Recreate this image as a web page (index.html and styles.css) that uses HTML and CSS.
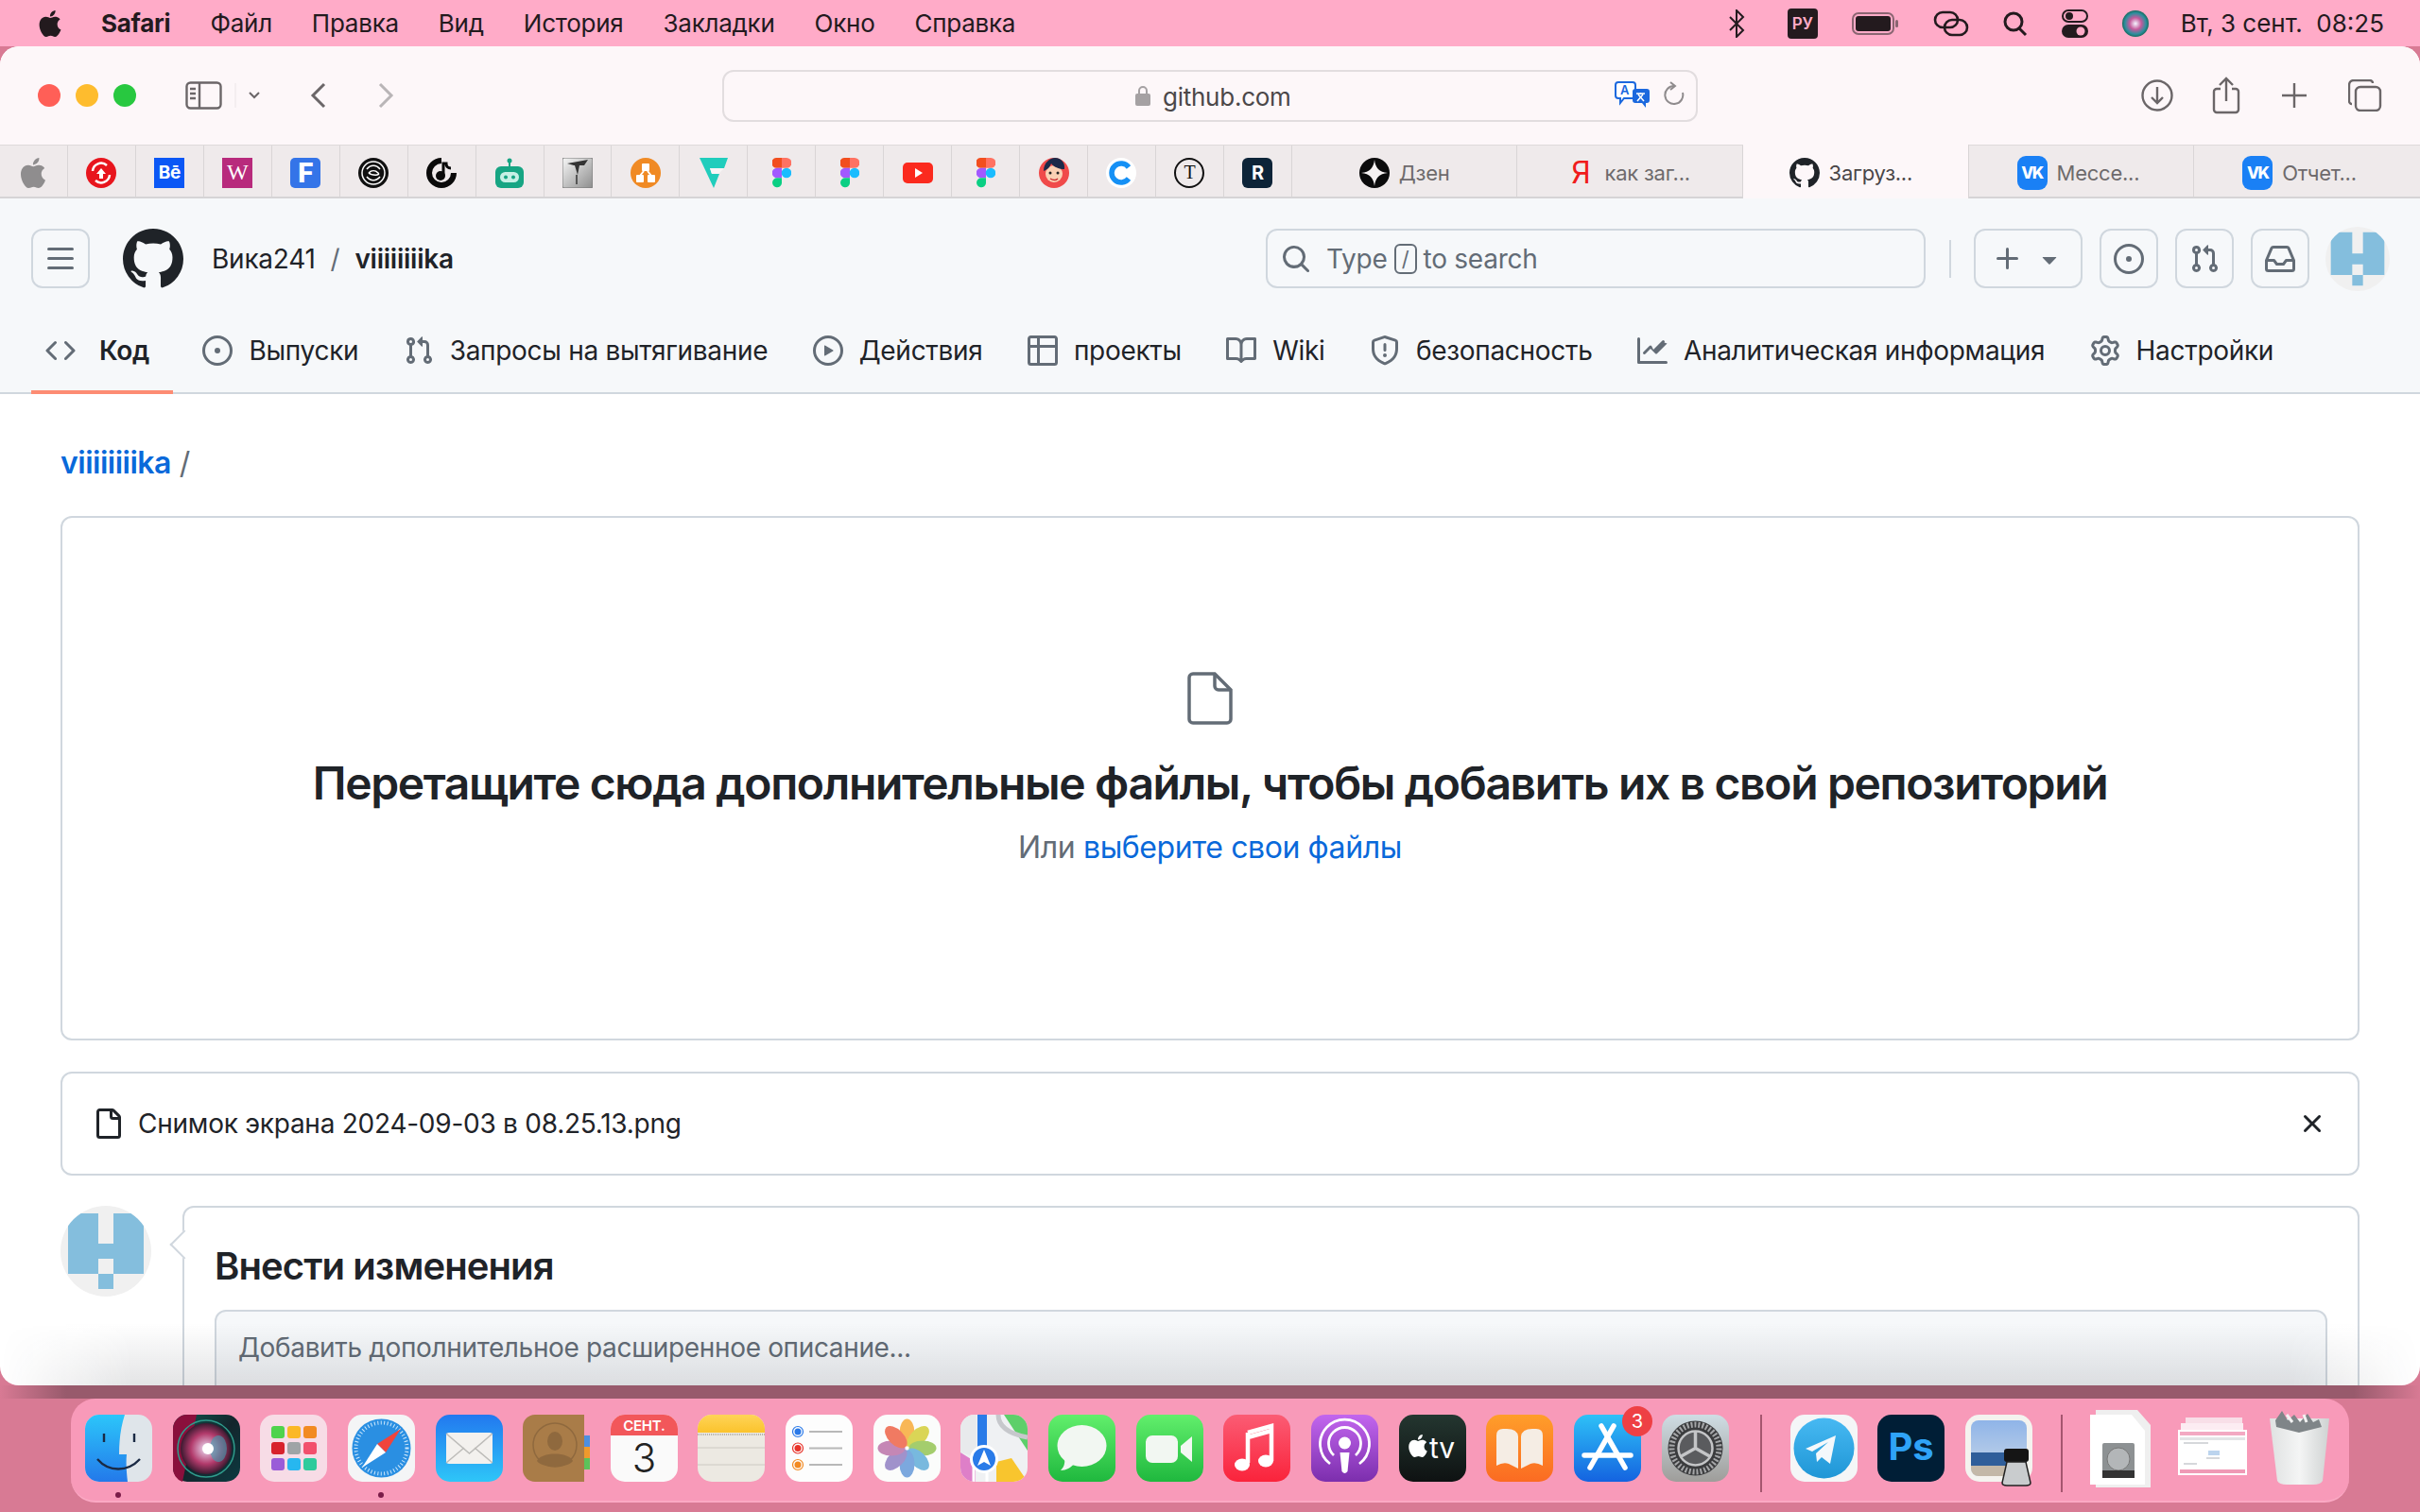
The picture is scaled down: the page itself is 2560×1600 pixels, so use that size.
FILE: index.html
```html
<!DOCTYPE html>
<html lang="ru">
<head>
  <meta charset="UTF-8" />
  <title>Загрузка файлов · viiiiiiiika</title>
  <link rel="stylesheet" href="styles.css">
</head>
<body>
  <svg class="sprites" width="0" height="0">
    <defs>
      <symbol id="apple" viewBox="0 0 24 24"><path d="M12.152 6.896c-.948 0-2.415-1.078-3.96-1.04-2.04.027-3.91 1.183-4.961 3.014-2.117 3.675-.546 9.103 1.519 12.09 1.013 1.454 2.208 3.09 3.792 3.039 1.52-.065 2.09-.987 3.935-.987 1.831 0 2.35.987 3.96.948 1.637-.026 2.676-1.48 3.676-2.948 1.156-1.688 1.636-3.325 1.662-3.415-.039-.013-3.182-1.221-3.22-4.857-.026-3.04 2.48-4.494 2.597-4.559-1.429-2.09-3.623-2.324-4.39-2.376-2-.156-3.675 1.09-4.61 1.09zM15.53 3.83c.843-1.012 1.4-2.427 1.245-3.83-1.207.052-2.662.805-3.532 1.818-.78.896-1.454 2.338-1.273 3.714 1.338.104 2.715-.688 3.559-1.701"/></symbol>
      <symbol id="mark" viewBox="0 0 16 16"><path d="M8 0c4.42 0 8 3.58 8 8a8.013 8.013 0 0 1-5.45 7.59c-.4.08-.55-.17-.55-.38 0-.27.01-1.13.01-2.2 0-.75-.25-1.23-.54-1.48 1.78-.2 3.65-.88 3.65-3.95 0-.88-.31-1.59-.82-2.15.08-.2.36-1.02-.08-2.12 0 0-.67-.22-2.2.82-.64-.18-1.32-.27-2-.27-.68 0-1.36.09-2 .27-1.53-1.03-2.2-.82-2.2-.82-.44 1.1-.16 1.92-.08 2.12-.51.56-.82 1.28-.82 2.15 0 3.06 1.86 3.75 3.64 3.95-.23.2-.44.55-.51 1.07-.46.21-1.61.55-2.33-.66-.15-.24-.6-.83-1.23-.82-.67.01-.27.38.01.53.34.19.73.9.82 1.13.16.45.68 1.31 2.69.94 0 .67.01 1.3.01 1.49 0 .21-.15.45-.55.38A7.995 7.995 0 0 1 0 8c0-4.42 3.58-8 8-8Z"/></symbol>
      <symbol id="code" viewBox="0 0 16 16"><path d="m11.28 3.22 4.25 4.25a.75.75 0 0 1 0 1.06l-4.25 4.25a.749.749 0 0 1-1.275-.326.749.749 0 0 1 .215-.734L13.94 8l-3.72-3.72a.749.749 0 0 1 .326-1.275.749.749 0 0 1 .734.215Zm-6.56 0a.751.751 0 0 1 1.042.018.751.751 0 0 1 .018 1.042L2.06 8l3.72 3.72a.749.749 0 0 1-.326 1.275.749.749 0 0 1-.734-.215L.47 8.53a.75.75 0 0 1 0-1.06Z"/></symbol>
      <symbol id="issue" viewBox="0 0 16 16"><path d="M8 9.5a1.5 1.5 0 1 0 0-3 1.5 1.5 0 0 0 0 3Z"/><path d="M8 0a8 8 0 1 1 0 16A8 8 0 0 1 8 0ZM1.5 8a6.5 6.5 0 1 0 13 0 6.5 6.5 0 0 0-13 0Z"/></symbol>
      <symbol id="pull" viewBox="0 0 16 16"><path d="M1.5 3.25a2.25 2.25 0 1 1 3 2.122v5.256a2.251 2.251 0 1 1-1.5 0V5.372A2.25 2.25 0 0 1 1.5 3.25Zm5.677-.177L9.573.677A.25.25 0 0 1 10 .854V2.5h1A2.5 2.5 0 0 1 13.5 5v5.628a2.251 2.251 0 1 1-1.5 0V5a1 1 0 0 0-1-1h-1v1.646a.25.25 0 0 1-.427.177L7.177 3.427a.25.25 0 0 1 0-.354ZM3.75 2.5a.75.75 0 1 0 0 1.5.75.75 0 0 0 0-1.5Zm0 9.5a.75.75 0 1 0 0 1.5.75.75 0 0 0 0-1.5Zm8.25.75a.75.75 0 1 0 1.5 0 .75.75 0 0 0-1.5 0Z"/></symbol>
      <symbol id="play" viewBox="0 0 16 16"><path d="M8 0a8 8 0 1 1 0 16A8 8 0 0 1 8 0ZM1.5 8a6.5 6.5 0 1 0 13 0 6.5 6.5 0 0 0-13 0Zm4.879-2.773 4.264 2.559a.25.25 0 0 1 0 .428l-4.264 2.559A.25.25 0 0 1 6 10.559V5.442a.25.25 0 0 1 .379-.215Z"/></symbol>
      <symbol id="table" viewBox="0 0 16 16"><path d="M0 1.75C0 .784.784 0 1.75 0h12.5C15.216 0 16 .784 16 1.75v12.5A1.75 1.75 0 0 1 14.25 16H1.75A1.75 1.75 0 0 1 0 14.25ZM6.5 6.5v8h7.75a.25.25 0 0 0 .25-.25V6.5Zm8-1.5V1.75a.25.25 0 0 0-.25-.25H6.5V5Zm-13 1.5v7.75c0 .138.112.25.25.25H5v-8ZM5 5V1.5H1.75a.25.25 0 0 0-.25.25V5Z"/></symbol>
      <symbol id="book" viewBox="0 0 16 16"><path d="M0 1.75A.75.75 0 0 1 .75 1h4.253c1.227 0 2.317.59 3 1.501A3.743 3.743 0 0 1 11.006 1h4.245a.75.75 0 0 1 .75.75v10.5a.75.75 0 0 1-.75.75h-4.507a2.25 2.25 0 0 0-1.591.659l-.622.621a.75.75 0 0 1-1.06 0l-.622-.621A2.25 2.25 0 0 0 5.258 13H.75a.75.75 0 0 1-.75-.75Zm7.251 10.324.004-5.073-.002-2.253A2.25 2.25 0 0 0 5.003 2.5H1.5v9h3.757a3.75 3.75 0 0 1 1.994.574ZM8.755 4.75l-.004 7.322a3.752 3.752 0 0 1 1.992-.572H14.5v-9h-3.495a2.25 2.25 0 0 0-2.25 2.25Z"/></symbol>
      <symbol id="shield" viewBox="0 0 16 16"><path d="M7.467.133a1.748 1.748 0 0 1 1.066 0l5.25 1.68A1.75 1.75 0 0 1 15 3.48V7c0 1.566-.32 3.182-1.303 4.682-.983 1.498-2.585 2.813-5.032 3.855a1.697 1.697 0 0 1-1.33 0c-2.447-1.042-4.049-2.357-5.032-3.855C1.32 10.182 1 8.566 1 7V3.48a1.75 1.75 0 0 1 1.217-1.667Zm.61 1.429a.25.25 0 0 0-.153 0l-5.25 1.68a.25.25 0 0 0-.174.238V7c0 1.358.275 2.666 1.057 3.86.784 1.194 2.121 2.34 4.366 3.297a.196.196 0 0 0 .154 0c2.245-.956 3.582-2.104 4.366-3.298C13.225 9.666 13.5 8.36 13.5 7V3.48a.251.251 0 0 0-.174-.237l-5.25-1.68ZM8.75 4.75v3a.75.75 0 0 1-1.5 0v-3a.75.75 0 0 1 1.5 0ZM9 10.5a1 1 0 1 1-2 0 1 1 0 0 1 2 0Z"/></symbol>
      <symbol id="graph" viewBox="0 0 16 16"><path d="M1.5 1.75V13.5h13.75a.75.75 0 0 1 0 1.5H.75a.75.75 0 0 1-.75-.75V1.75a.75.75 0 0 1 1.5 0Zm14.28 2.53-5.25 5.25a.75.75 0 0 1-1.06 0L7 7.06 4.28 9.78a.751.751 0 0 1-1.042-.018.751.751 0 0 1-.018-1.042l3.25-3.25a.75.75 0 0 1 1.06 0L8.5 7.44l4.72-4.72a.751.751 0 0 1 1.042.018.751.751 0 0 1 .018 1.042Z"/></symbol>
      <symbol id="gear" viewBox="0 0 16 16"><path d="M8 0a8.2 8.2 0 0 1 .701.031C9.444.095 9.99.645 10.16 1.29l.288 1.107c.018.066.079.158.212.224.231.114.454.243.668.386.123.082.233.09.299.071l1.103-.303c.644-.176 1.392.021 1.82.63.27.385.506.792.704 1.218.315.675.111 1.422-.364 1.891l-.814.806c-.049.048-.098.147-.088.294.016.257.016.515 0 .772-.01.147.038.246.088.294l.814.806c.475.469.679 1.216.364 1.891a7.977 7.977 0 0 1-.704 1.217c-.428.61-1.176.807-1.82.63l-1.102-.302c-.067-.019-.177-.011-.3.071a5.909 5.909 0 0 1-.668.386c-.133.066-.194.158-.211.224l-.29 1.106c-.168.646-.715 1.196-1.458 1.26a8.006 8.006 0 0 1-1.402 0c-.743-.064-1.289-.614-1.458-1.26l-.289-1.106c-.018-.066-.079-.158-.212-.224a5.738 5.738 0 0 1-.668-.386c-.123-.082-.233-.09-.299-.071l-1.103.303c-.644.176-1.392-.021-1.82-.63a8.12 8.12 0 0 1-.704-1.218c-.315-.675-.111-1.422.363-1.891l.815-.806c.05-.048.098-.147.088-.294a6.214 6.214 0 0 1 0-.772c.01-.147-.038-.246-.088-.294l-.815-.806C.635 6.045.431 5.298.746 4.623a7.92 7.92 0 0 1 .704-1.217c.428-.61 1.176-.807 1.82-.63l1.102.302c.067.019.177.011.3-.071.214-.143.437-.272.668-.386.133-.066.194-.158.211-.224l.29-1.106C6.009.645 6.556.095 7.299.03 7.53.01 7.764 0 8 0Zm-.571 1.525c-.036.003-.108.036-.137.146l-.289 1.105c-.147.561-.549.967-.998 1.189-.173.086-.34.183-.5.29-.417.278-.97.423-1.529.27l-1.103-.303c-.109-.03-.175.016-.195.045-.22.312-.412.644-.573.99-.014.031-.021.11.059.19l.815.806c.411.406.562.957.53 1.456a4.709 4.709 0 0 0 0 .582c.032.499-.119 1.05-.53 1.456l-.815.806c-.081.08-.073.159-.059.19.162.346.353.677.573.989.02.03.085.076.195.046l1.102-.303c.56-.153 1.113-.008 1.53.27.161.107.328.204.501.29.447.222.85.629.997 1.189l.289 1.105c.029.109.101.143.137.146a6.6 6.6 0 0 0 1.142 0c.036-.003.108-.036.137-.146l.289-1.105c.147-.561.549-.967.998-1.189.173-.086.34-.183.5-.29.417-.278.97-.423 1.529-.27l1.103.303c.109.029.175-.016.195-.045.22-.313.411-.644.573-.99.014-.031.021-.11-.059-.19l-.815-.806c-.411-.406-.562-.957-.53-1.456a4.709 4.709 0 0 0 0-.582c-.032-.499.119-1.05.53-1.456l.815-.806c.081-.08.073-.159.059-.19a6.464 6.464 0 0 0-.573-.989c-.02-.03-.085-.076-.195-.046l-1.102.303c-.56.153-1.113.008-1.53-.27a4.44 4.44 0 0 0-.501-.29c-.447-.222-.85-.629-.997-1.189l-.289-1.105c-.029-.11-.101-.143-.137-.146a6.6 6.6 0 0 0-1.142 0ZM11 8a3 3 0 1 1-6 0 3 3 0 0 1 6 0ZM9.5 8a1.5 1.5 0 1 0-3.001.001A1.5 1.5 0 0 0 9.5 8Z"/></symbol>
      <symbol id="search" viewBox="0 0 16 16"><path d="M10.68 11.74a6 6 0 0 1-7.922-8.982 6 6 0 0 1 8.982 7.922l3.04 3.04a.749.749 0 0 1-.326 1.275.749.749 0 0 1-.734-.215ZM11.5 7a4.499 4.499 0 1 0-8.997 0A4.499 4.499 0 0 0 11.5 7Z"/></symbol>
      <symbol id="bars" viewBox="0 0 16 16"><path d="M1 2.75A.75.75 0 0 1 1.75 2h12.5a.75.75 0 0 1 0 1.5H1.75A.75.75 0 0 1 1 2.75Zm0 5A.75.75 0 0 1 1.75 7h12.5a.75.75 0 0 1 0 1.5H1.75A.75.75 0 0 1 1 7.75ZM1.75 12h12.5a.75.75 0 0 1 0 1.5H1.75a.75.75 0 0 1 0-1.5Z"/></symbol>
      <symbol id="plus" viewBox="0 0 16 16"><path d="M7.75 2a.75.75 0 0 1 .75.75V7h4.25a.75.75 0 0 1 0 1.5H8.5v4.25a.75.75 0 0 1-1.5 0V8.5H2.75a.75.75 0 0 1 0-1.5H7V2.75A.75.75 0 0 1 7.75 2Z"/></symbol>
      <symbol id="caret" viewBox="0 0 16 16"><path d="m4.427 7.427 3.396 3.396a.25.25 0 0 0 .354 0l3.396-3.396A.25.25 0 0 0 11.396 7H4.604a.25.25 0 0 0-.177.427Z"/></symbol>
      <symbol id="inbox" viewBox="0 0 16 16"><path d="M2.8 2.06A1.75 1.75 0 0 1 4.41 1h7.18c.7 0 1.333.417 1.61 1.06l2.74 6.395c.04.093.06.194.06.295v4.5A1.75 1.75 0 0 1 14.25 15H1.75A1.75 1.75 0 0 1 0 13.25v-4.5c0-.101.02-.202.06-.295Zm1.61.44a.25.25 0 0 0-.23.152L1.887 8H4.75a.75.75 0 0 1 .6.3L6.625 10h2.75l1.275-1.7a.75.75 0 0 1 .6-.3h2.863L11.82 2.652a.25.25 0 0 0-.23-.152Zm10.09 7h-2.875l-1.275 1.7a.75.75 0 0 1-.6.3h-3.5a.75.75 0 0 1-.6-.3L4.375 9.5H1.5v3.75c0 .138.112.25.25.25h12.5a.25.25 0 0 0 .25-.25Z"/></symbol>
      <symbol id="file" viewBox="0 0 16 16"><path d="M2 1.75C2 .784 2.784 0 3.75 0h6.586c.464 0 .909.184 1.237.513l2.914 2.914c.329.328.513.773.513 1.237v9.586A1.75 1.75 0 0 1 13.25 16h-9.5A1.75 1.75 0 0 1 2 14.25Zm1.75-.25a.25.25 0 0 0-.25.25v12.5c0 .138.112.25.25.25h9.5a.25.25 0 0 0 .25-.25V6h-2.75A1.75 1.75 0 0 1 9 4.25V1.5Zm6.75.062V4.25c0 .138.112.25.25.25h2.688l-.011-.013-2.914-2.914-.013-.011Z"/></symbol>
      <symbol id="close" viewBox="0 0 16 16"><path d="M3.72 3.72a.75.75 0 0 1 1.06 0L8 6.94l3.22-3.22a.749.749 0 0 1 1.275.326.749.749 0 0 1-.215.734L9.06 8l3.22 3.22a.749.749 0 0 1-.326 1.275.749.749 0 0 1-.734-.215L8 9.06l-3.22 3.22a.751.751 0 0 1-1.042-.018.751.751 0 0 1-.018-1.042L6.94 8 3.72 4.78a.75.75 0 0 1 0-1.06Z"/></symbol>
      <clipPath id="identiClip"><circle cx="48" cy="48" r="48"/></clipPath>
      <symbol id="identicon" viewBox="0 0 96 96"><circle cx="48" cy="48" r="48" fill="#f0f0f0"/><path clip-path="url(#identiClip)" fill="#84bedd" d="M8 8h32v64H8zM56 8h32v64H56zM40 40h16v16H40zM40 72h16v16H40z"/></symbol>
      <symbol id="figma" viewBox="0 0 20 32"><path fill="#f24e1e" d="M4 0h6v10.700H5a5 5 0 0 1-1-10.700z"/><path fill="#ff7262" d="M10 0h5a5.300 5.300 0 0 1 0 10.700h-5z"/><path fill="#a259ff" d="M5 10.700h5v10.600H5a5.300 5.300 0 0 1 0-10.600z"/><circle cx="15" cy="16" r="5.300" fill="#1abcfe"/><path fill="#0acf83" d="M5 21.300h5V27a5 5 0 1 1-5-5.700z"/></symbol>
      <linearGradient id="blueV" x1="0" y1="0" x2="0" y2="1"><stop offset="0" stop-color="#2ec1f7"/><stop offset="1" stop-color="#1463e0"/></linearGradient>
    </defs>
  </svg>

  <header class="menubar">
    <svg class="menu-apple"><use href="#apple"/></svg>
    <b class="menu-app">Safari</b>
    <span>Файл</span>
    <span>Правка</span>
    <span>Вид</span>
    <span>История</span>
    <span>Закладки</span>
    <span>Окно</span>
    <span>Справка</span>
    <div class="menu-status">
      <svg class="menu-bluetooth" width="18" height="30" viewBox="0 0 18 30" fill="none" stroke="#231a1e" stroke-width="2"><path d="M2 8l14 14-7 7V1l7 7L2 22"/></svg>
      <span class="input-badge">РУ</span>
      <svg width="50" height="26" viewBox="0 0 50 26"><rect x="1" y="2" width="43" height="22" rx="6" fill="none" stroke="#8b6572" stroke-width="2"/><rect x="4" y="5" width="37" height="16" rx="3" fill="#231a1e"/><rect x="46" y="9" width="3" height="8" rx="1.500" fill="#8b6572"/></svg>
      <svg width="38" height="30" viewBox="0 0 38 30" fill="none" stroke="#231a1e" stroke-width="2.600"><rect x="2" y="3" width="24" height="16" rx="8"/><rect x="12" y="11" width="24" height="16" rx="8"/></svg>
      <svg width="26" height="28" viewBox="0 0 26 28" fill="none" stroke="#231a1e" stroke-width="3"><circle cx="11" cy="12" r="9"/><path d="M17 19l7 7"/></svg>
      <svg width="28" height="32" viewBox="0 0 28 32"><rect x="1" y="2" width="26" height="12" rx="6" fill="none" stroke="#231a1e" stroke-width="2"/><circle cx="8" cy="8" r="4" fill="#231a1e"/><rect y="17" width="28" height="14" rx="7" fill="#231a1e"/><circle cx="20" cy="24" r="4.500" fill="#ffabc8"/></svg>
      <svg width="28" height="32" viewBox="0 0 28 28"><defs><radialGradient id="siriMini"><stop offset="0" stop-color="#f5f5ff"/><stop offset=".45" stop-color="#c45a9c"/><stop offset=".8" stop-color="#2c8f9e"/><stop offset="1" stop-color="#186b60"/></radialGradient></defs><circle cx="14" cy="14" r="14" fill="url(#siriMini)"/></svg>
      <span class="menu-clock">Вт, 3 сент.&nbsp; 08:25</span>
    </div>
  </header>

  <div class="window">
    <div class="toolbar">
      <div class="toolbar-left">
        <span class="light light-red"></span>
        <span class="light light-yellow"></span>
        <span class="light light-green"></span>
        <svg class="sidebar-btn" width="39" height="30" viewBox="0 0 39 30" fill="none" stroke="#6b6668" stroke-width="2.400"><rect x="1.500" y="1.500" width="36" height="27" rx="4"/><path d="M15 1.500v27"/><path d="M5 8h6M5 13h6M5 18h6"/></svg>
        <svg class="sidebar-chevron" width="28" height="28" viewBox="0 0 28 28" fill="none"><path d="M1 1v26" stroke="#ece6e8"/><path d="M16 11l5 5 5-5" stroke="#6b6668" stroke-width="2"/></svg>
        <svg class="nav-back" width="20" height="30" viewBox="0 0 20 30" fill="none" stroke="#6b6668" stroke-width="3"><path d="M16 3L4 15l12 12"/></svg>
        <svg class="nav-forward" width="20" height="30" viewBox="0 0 20 30" fill="none" stroke="#b9b5b7" stroke-width="3"><path d="M4 3l12 12L4 27"/></svg>
      </div>
      <div class="urlbar">
        <svg class="url-lock" width="16" height="22" viewBox="0 0 16 22"><path d="M4 10V6a4 4 0 0 1 8 0v4" fill="none" stroke="#a5a1a3" stroke-width="2"/><rect y="9" width="16" height="13" rx="2" fill="#a5a1a3"/></svg>
        <span class="url-text">github.com</span>
        <svg class="url-translate" width="38" height="28" viewBox="0 0 38 28"><path fill="#fff" stroke="#1b68de" stroke-width="2" d="M4 1h15a3 3 0 0 1 3 3v11a3 3 0 0 1-3 3H10l-4 5v-5H4a3 3 0 0 1-3-3V4a3 3 0 0 1 3-3z"/><text x="6" y="14" class="translate-a">A</text><path fill="#1b68de" d="M22 8h12a3 3 0 0 1 3 3v9a3 3 0 0 1-3 3h-1v5l-4-5h-7a3 3 0 0 1-3-3v-9a3 3 0 0 1 3-3z"/><path d="M23 13h9M27.500 12v2M24 21l6-7M31 21l-6-7" stroke="#fff" stroke-width="1.500" fill="none"/></svg>
        <svg class="url-reload" width="22" height="28" viewBox="0 0 22 28" fill="none" stroke="#8f8b8d" stroke-width="2"><path d="M11 5a9.500 9.500 0 1 0 9 7"/><path d="M7 1l5 4-5 4"/></svg>
      </div>
      <div class="toolbar-right">
        <svg width="34" height="34" viewBox="0 0 34 34" fill="none" stroke="#6b6668" stroke-width="2.400"><circle cx="17" cy="17" r="15.500"/><path d="M17 8v17M11 19l6 6 6-6"/></svg>
        <svg width="30" height="40" viewBox="0 0 30 40" fill="none" stroke="#6b6668" stroke-width="2.400"><path d="M9 13H5a3 3 0 0 0-3 3v19a3 3 0 0 0 3 3h20a3 3 0 0 0 3-3V16a3 3 0 0 0-3-3h-4"/><path d="M15 26V2M8 9l7-7 7 7"/></svg>
        <svg class="tool-plus" width="28" height="28" viewBox="0 0 28 28" fill="none" stroke="#6b6668" stroke-width="2.400"><path d="M14 1v26M1 14h26"/></svg>
        <svg width="36" height="34" viewBox="0 0 36 34" fill="none" stroke="#6b6668" stroke-width="2.400"><rect x="8" y="8" width="26" height="25" rx="5"/><path d="M4 26a3 3 0 0 1-3-3V6a5 5 0 0 1 5-5h17a3 3 0 0 1 3 3"/></svg>
      </div>
    </div>

    <div class="tabbar">
      <div class="pin"><svg class="fav fav-grey"><use href="#apple"/></svg></div>
      <div class="pin"><svg class="fav" viewBox="0 0 32 32"><circle cx="16" cy="16" r="16" fill="#e8151d"/><path d="M7 14a9 9 0 0 1 15-6M25 18a9 9 0 0 1-15 6" fill="none" stroke="#fff" stroke-width="2.500"/><path d="M16 11l5 6h-3v5h-4v-5h-3z" fill="#fff"/></svg></div>
      <div class="pin"><span class="fav-tile fav-be">Bē</span></div>
      <div class="pin"><span class="fav-tile fav-w">W</span></div>
      <div class="pin"><span class="fav-tile fav-f">F</span></div>
      <div class="pin"><svg class="fav" viewBox="0 0 32 32"><circle cx="16" cy="16" r="16" fill="#111"/><circle cx="16" cy="16" r="12" fill="none" stroke="#fff" stroke-width="1.500"/><path d="M9 12c4-5 10-5 14 0M9 20c4 5 10 5 14 0M11 16c3-3 7-3 10 0s-7 3-10 0" fill="none" stroke="#fff" stroke-width="1.600"/></svg></div>
      <div class="pin"><svg class="fav" viewBox="0 0 32 32"><path d="M16 3a13 13 0 1 0 13 13" fill="none" stroke="#0a0a0a" stroke-width="6"/><circle cx="15" cy="19" r="5" fill="#0a0a0a"/><path d="M18 19V6h3c0 3 2 5 5 5" fill="none" stroke="#0a0a0a" stroke-width="3"/></svg></div>
      <div class="pin"><svg class="fav" viewBox="0 0 32 32"><path d="M16 1v9" stroke="#17a583" stroke-width="2"/><circle cx="16" cy="3" r="2.500" fill="#17a583"/><rect x="1" y="9" width="30" height="23" rx="6" fill="#17a583"/><rect x="6" y="15" width="20" height="11" rx="5.500" fill="#c7f0e5"/><circle cx="12" cy="20.500" r="2" fill="#17a583"/><circle cx="20" cy="20.500" r="2" fill="#17a583"/></svg></div>
      <div class="pin"><svg class="fav" viewBox="0 0 32 32"><defs><linearGradient id="archive" x1="0" y1="0" x2="1" y2="1"><stop offset="0" stop-color="#f7f7f7"/><stop offset="1" stop-color="#8d8d8d"/></linearGradient></defs><rect width="32" height="32" rx="2" fill="url(#archive)" stroke="#777"/><path d="M5 6l22-4-4 6H12zM13 8l3 10 2-10" fill="#333"/><path d="M15 18v10" stroke="#555" stroke-width="2"/></svg></div>
      <div class="pin"><svg class="fav" viewBox="0 0 32 32"><circle cx="16" cy="16" r="16" fill="#f08a24"/><g fill="#fff"><rect x="12" y="6" width="8" height="8" rx="1"/><rect x="6" y="18" width="8" height="8" rx="1"/><rect x="18" y="18" width="8" height="8" rx="1"/></g><path d="M14 14l-4 5M18 14l4 5" stroke="#fff" stroke-width="2"/></svg></div>
      <div class="pin"><svg class="fav" viewBox="0 0 32 32"><path d="M1 0h30l-4 11H12l2 6h8l-6 15L1 0z" fill="#20cdbc"/><path d="M12 11h15l-6 6h-7z" fill="#f8f5f6"/></svg></div>
      <div class="pin"><svg class="fav-figma"><use href="#figma"/></svg></div>
      <div class="pin"><svg class="fav-figma"><use href="#figma"/></svg></div>
      <div class="pin"><svg class="fav" viewBox="0 0 32 32"><rect y="5" width="32" height="22" rx="5" fill="#fb2a1e"/><path d="M13 11l8 5-8 5z" fill="#fff"/></svg></div>
      <div class="pin"><svg class="fav-figma"><use href="#figma"/></svg></div>
      <div class="pin"><svg class="fav" viewBox="0 0 32 32"><circle cx="16" cy="16" r="16" fill="#f04a4a"/><circle cx="16" cy="17" r="9" fill="#fbd1b4"/><path d="M5 14C5 5 12 0 17 0c7 0 11 6 10 12-5 0-11-2-14-6-1 3-3 6-8 8z" fill="#1c2a4a"/><circle cx="12" cy="16" r="1.500" fill="#222"/><circle cx="20" cy="16" r="1.500" fill="#222"/><path d="M12 22c3 2 6 2 8 0" stroke="#c33" stroke-width="1.500" fill="none"/></svg></div>
      <div class="pin"><svg class="fav" viewBox="0 0 32 32"><circle cx="16" cy="16" r="16" fill="#fff"/><path d="M24 10a10 10 0 1 0 0 12" fill="none" stroke="#1590f5" stroke-width="5.500"/></svg></div>
      <div class="pin"><span class="fav-tile fav-t">T</span></div>
      <div class="pin"><span class="fav-tile fav-r">R</span></div>
      <div class="tab"><svg class="fav" viewBox="0 0 32 32"><circle cx="16" cy="16" r="16" fill="#0b0b0c"/><path d="M16 2c1 9 5 13 14 14-9 1-13 5-14 14-1-9-5-13-14-14 9-1 13-5 14-14z" fill="#f5f1f2"/></svg><span>Дзен</span></div>
      <div class="tab"><span class="fav-ya">Я</span><span>как заг...</span></div>
      <div class="tab tab-active"><svg class="fav fav-dark"><use href="#mark"/></svg><span>Загруз...</span></div>
      <div class="tab tab-vk"><span class="fav-tile fav-vk">VK</span><span>Мессе...</span></div>
      <div class="tab tab-last"><span class="fav-tile fav-vk">VK</span><span>Отчет...</span></div>
    </div>

    <div class="gh-header">
      <div class="gh-top">
        <button class="gh-btn gh-menu"><svg class="oct"><use href="#bars"/></svg></button>
        <svg class="gh-logo"><use href="#mark"/></svg>
        <span class="gh-owner">Вика241</span>
        <span class="gh-slash">/</span>
        <b class="gh-repo">viiiiiiiika</b>
        <div class="gh-search">
          <svg class="oct"><use href="#search"/></svg>
          <span>Type</span><kbd>/</kbd><span>to search</span>
        </div>
        <span class="gh-divider"></span>
        <button class="gh-btn gh-plus"><svg class="oct"><use href="#plus"/></svg><svg class="oct"><use href="#caret"/></svg></button>
        <button class="gh-btn"><svg class="oct"><use href="#issue"/></svg></button>
        <button class="gh-btn"><svg class="oct"><use href="#pull"/></svg></button>
        <button class="gh-btn"><svg class="oct"><use href="#inbox"/></svg></button>
        <svg class="gh-avatar"><use href="#identicon"/></svg>
      </div>
      <nav class="gh-nav">
        <a class="nav-item nav-current"><svg class="oct"><use href="#code"/></svg><span>Код</span></a>
        <a class="nav-item"><svg class="oct"><use href="#issue"/></svg><span>Выпуски</span></a>
        <a class="nav-item"><svg class="oct"><use href="#pull"/></svg><span>Запросы на вытягивание</span></a>
        <a class="nav-item"><svg class="oct"><use href="#play"/></svg><span>Действия</span></a>
        <a class="nav-item"><svg class="oct"><use href="#table"/></svg><span>проекты</span></a>
        <a class="nav-item"><svg class="oct"><use href="#book"/></svg><span>Wiki</span></a>
        <a class="nav-item"><svg class="oct"><use href="#shield"/></svg><span>безопасность</span></a>
        <a class="nav-item"><svg class="oct"><use href="#graph"/></svg><span>Аналитическая информация</span></a>
        <a class="nav-item"><svg class="oct"><use href="#gear"/></svg><span>Настройки</span></a>
      </nav>
    </div>

    <main class="content">
      <div class="crumbs"><a>viiiiiiiika</a> <span>/</span></div>
      <section class="dropzone">
        <svg class="drop-icon" viewBox="0 0 48 56" fill="none" stroke="#636c76" stroke-width="3.500"><path d="M2 6a4 4 0 0 1 4-4h23l17 17v31a4 4 0 0 1-4 4H6a4 4 0 0 1-4-4z"/><path d="M29 2v13a4 4 0 0 0 4 4h13"/></svg>
        <h2>Перетащите сюда дополнительные файлы, чтобы добавить их в свой репозиторий</h2>
        <p>Или <a>выберите свои файлы</a></p>
      </section>
      <div class="file-row">
        <svg class="oct"><use href="#file"/></svg>
        <span>Снимок экрана 2024-09-03 в 08.25.13.png</span>
        <svg class="oct file-remove"><use href="#close"/></svg>
      </div>
      <div class="commit">
        <svg class="commit-avatar"><use href="#identicon"/></svg>
        <div class="commit-box">
          <h3>Внести изменения</h3>
          <div class="commit-input">Добавить дополнительное расширенное описание...</div>
        </div>
      </div>
    </main>
    <div class="dock-shade"></div>
  </div>

  <div class="dock-gap"></div>

  <footer class="dock">
    <div class="dock-item running"><svg viewBox="0 0 71 71"><defs><linearGradient id="finderL" x1="0" y1="0" x2="0" y2="1"><stop offset="0" stop-color="#2cc6fa"/><stop offset="1" stop-color="#2379ea"/></linearGradient></defs><rect width="71" height="71" rx="15" fill="#dfe5ea"/><path d="M15 0h27c-4 12-6 26-6 42h8c-1 10 0 20 1 29H15A15 15 0 0 1 0 56V15A15 15 0 0 1 15 0z" fill="url(#finderL)"/><path d="M20 20v9M52 20v9" stroke="#1a2a44" stroke-width="2.400"/><path d="M13 47c12 14 32 14 45 0" fill="none" stroke="#1a2a44" stroke-width="2.400"/></svg></div>
    <div class="dock-item"><svg viewBox="0 0 71 71"><defs><radialGradient id="siriBig"><stop offset="0" stop-color="#fff"/><stop offset=".2" stop-color="#d8a8c8"/><stop offset=".6" stop-color="#b23a6b"/><stop offset="1" stop-color="#3a1a30"/></radialGradient><linearGradient id="siriBg" x1="0" y1="0" x2="1" y2="1"><stop offset="0" stop-color="#0e5a52"/><stop offset=".5" stop-color="#13252c"/><stop offset="1" stop-color="#0d3a40"/></linearGradient></defs><rect width="71" height="71" rx="15" fill="url(#siriBg)"/><path d="M0 15A15 15 0 0 1 15 0h10L10 71A15 15 0 0 1 0 56z" fill="#8a0f3c"/><circle cx="35" cy="36" r="27" fill="url(#siriBig)"/><circle cx="35" cy="36" r="30" fill="none" stroke="#2f9c8c" stroke-width="1.500"/><ellipse cx="48" cy="36" rx="9" ry="14" fill="#3fa0b3" opacity=".6"/><circle cx="37" cy="36" r="6" fill="#fff"/></svg></div>
    <div class="dock-item"><svg viewBox="0 0 71 71"><rect width="71" height="71" rx="15" fill="#f7dce6"/><g><rect x="12" y="12" width="14" height="13" rx="3" fill="#4fd34c"/><rect x="29" y="12" width="14" height="13" rx="3" fill="#fbb826"/><rect x="46" y="12" width="14" height="13" rx="3" fill="#f28a22"/><rect x="12" y="29" width="14" height="13" rx="3" fill="#d8222c"/><rect x="29" y="29" width="14" height="13" rx="3" fill="#9fa4a6"/><rect x="46" y="29" width="14" height="13" rx="3" fill="#f2506c"/><rect x="12" y="46" width="14" height="13" rx="3" fill="#9a5cd8"/><rect x="29" y="46" width="14" height="13" rx="3" fill="#27b7f0"/><rect x="46" y="46" width="14" height="13" rx="3" fill="#2ecb9c"/></g></svg></div>
    <div class="dock-item running"><svg viewBox="0 0 71 71"><rect width="71" height="71" rx="15" fill="#f4f5f6"/><circle cx="35.500" cy="35.500" r="31" fill="#2a8fe2"/><circle cx="35.500" cy="35.500" r="27" fill="none" stroke="#cfe8fb" stroke-width="4" stroke-dasharray="1 2.500"/><path d="M56 15L31 31l9 9z" fill="#f0443c"/><path d="M15 56l25-16-9-9z" fill="#fff"/></svg></div>
    <div class="dock-item"><svg viewBox="0 0 71 71"><defs><linearGradient id="mailBg" x1="0" y1="0" x2="0" y2="1"><stop offset="0" stop-color="#2278ef"/><stop offset="1" stop-color="#2ec6f8"/></linearGradient></defs><rect width="71" height="71" rx="15" fill="url(#mailBg)"/><rect x="11" y="19" width="49" height="33" rx="3" fill="#f3f1ee"/><path d="M11 20l24.500 21L60 20M11 51l19-16M60 51L41 35" fill="none" stroke="#bdbcb9" stroke-width="1.500"/></svg></div>
    <div class="dock-item"><svg viewBox="0 0 71 71"><rect x="60" y="22" width="11" height="12" fill="#4c8fe0"/><rect x="60" y="34" width="11" height="12" fill="#ef9a2c"/><rect x="60" y="46" width="11" height="12" fill="#5cc35a"/><path d="M13 0h52v71H13A13 13 0 0 1 0 58V13A13 13 0 0 1 13 0z" fill="#a97c48"/><circle cx="34" cy="32" r="23" fill="none" stroke="#8f693e" stroke-width="1.500"/><ellipse cx="34" cy="28" rx="8" ry="10" fill="#8f693e"/><path d="M15 49c4-10 34-10 38 0-6 8-32 8-38 0z" fill="#8f693e"/></svg></div>
    <div class="dock-item dock-cal"><span class="cal-month">СЕНТ.</span><span class="cal-day">3</span></div>
    <div class="dock-item"><svg viewBox="0 0 71 71"><defs><linearGradient id="noteTop" x1="0" y1="0" x2="0" y2="1"><stop offset="0" stop-color="#fed458"/><stop offset="1" stop-color="#fbc32c"/></linearGradient></defs><rect width="71" height="71" rx="15" fill="#ece9e2"/><path d="M15 0h41a15 15 0 0 1 15 15v4H0v-4A15 15 0 0 1 15 0z" fill="url(#noteTop)"/><path d="M0 21h71" stroke="#b5b2ac" stroke-width="2" stroke-dasharray="1 1"/><path d="M0 35h71M0 53h71" stroke="#d6d3cd" stroke-width="1.500"/></svg></div>
    <div class="dock-item"><svg viewBox="0 0 71 71"><rect width="71" height="71" rx="15" fill="#fdfdfd"/><g fill="none" stroke-width="1.200"><circle cx="13" cy="18" r="5.500" stroke="#2a79e8"/><circle cx="13" cy="35.500" r="5.500" stroke="#e8332a"/><circle cx="13" cy="53" r="5.500" stroke="#f28a22"/></g><circle cx="13" cy="18" r="3.500" fill="#2a79e8"/><circle cx="13" cy="35.500" r="3.500" fill="#e8332a"/><circle cx="13" cy="53" r="3.500" fill="#f28a22"/><path d="M25 18h35M25 35.500h35M25 53h35" stroke="#b8b8b8" stroke-width="1.800"/></svg></div>
    <div class="dock-item"><svg viewBox="0 0 71 71"><rect width="71" height="71" rx="15" fill="#fbfcfb"/><g opacity=".8"><ellipse cx="35.500" cy="19" rx="8" ry="14.500" fill="#f8a72e"/><ellipse cx="35.500" cy="19" rx="8" ry="14.500" fill="#d2cc2e" transform="rotate(45 35.500 35.500)"/><ellipse cx="35.500" cy="19" rx="8" ry="14.500" fill="#8fc24a" transform="rotate(90 35.500 35.500)"/><ellipse cx="35.500" cy="19" rx="8" ry="14.500" fill="#58a9d8" transform="rotate(135 35.500 35.500)"/><ellipse cx="35.500" cy="19" rx="8" ry="14.500" fill="#5d94d8" transform="rotate(180 35.500 35.500)"/><ellipse cx="35.500" cy="19" rx="8" ry="14.500" fill="#8a78c0" transform="rotate(225 35.500 35.500)"/><ellipse cx="35.500" cy="19" rx="8" ry="14.500" fill="#b86ba4" transform="rotate(270 35.500 35.500)"/><ellipse cx="35.500" cy="19" rx="8" ry="14.500" fill="#ee5a3c" transform="rotate(315 35.500 35.500)"/></g></svg></div>
    <div class="dock-item"><svg viewBox="0 0 71 71"><clipPath id="mapClip"><rect width="71" height="71" rx="15"/></clipPath><g clip-path="url(#mapClip)"><rect width="71" height="71" fill="#eff1f3"/><path d="M46 0h25v38z" fill="#5dcf6a"/><path d="M0 0h17v45L0 40z" fill="#e8eaec"/><path d="M0 40l16 10v21H0z" fill="#de7fc8"/><path d="M38 50l16-4 17 25H38z" fill="#f8c52e"/><path d="M18 0h10v40H18z" fill="#2a7be8"/><path d="M40 0c0 12 10 20 31 24" fill="none" stroke="#c6c8cc" stroke-width="5"/><path d="M14 71V50M28 71V50" stroke="#fff" stroke-width="3"/></g><circle cx="25" cy="47" r="15" fill="#fff"/><circle cx="25" cy="47" r="12" fill="#2a7be8"/><path d="M25 37l7 17-7-4-7 4z" fill="#fff"/></svg></div>
    <div class="dock-item"><svg viewBox="0 0 71 71"><defs><linearGradient id="greenBg" x1="0" y1="0" x2="0" y2="1"><stop offset="0" stop-color="#62ef6c"/><stop offset="1" stop-color="#1fb83e"/></linearGradient></defs><rect width="71" height="71" rx="15" fill="url(#greenBg)"/><ellipse cx="35.500" cy="33" rx="26" ry="22" fill="#f2f7f2"/><path d="M17 46c1 6-1 10-4 13 6 0 11-3 14-7z" fill="#f2f7f2"/></svg></div>
    <div class="dock-item"><svg viewBox="0 0 71 71"><rect width="71" height="71" rx="15" fill="url(#greenBg)"/><rect x="10" y="22" width="34" height="29" rx="7" fill="#f2f7f2"/><path d="M47 33l12-10v27L47 40z" fill="#f2f7f2"/></svg></div>
    <div class="dock-item"><svg viewBox="0 0 71 71"><defs><linearGradient id="musicBg" x1="0" y1="0" x2="0" y2="1"><stop offset="0" stop-color="#fb5c74"/><stop offset="1" stop-color="#fa233b"/></linearGradient></defs><rect width="71" height="71" rx="15" fill="url(#musicBg)"/><path d="M26 19l25-7v37" fill="none" stroke="#fff" stroke-width="4.500"/><path d="M26 19v32M26 24l25-7" fill="none" stroke="#fff" stroke-width="4.500"/><ellipse cx="20" cy="53" rx="8" ry="6.500" fill="#fff"/><ellipse cx="45" cy="49" rx="8" ry="6.500" fill="#fff"/></svg></div>
    <div class="dock-item"><svg viewBox="0 0 71 71"><defs><linearGradient id="podBg" x1="0" y1="0" x2="0" y2="1"><stop offset="0" stop-color="#c266ee"/><stop offset="1" stop-color="#7c2ead"/></linearGradient></defs><rect width="71" height="71" rx="15" fill="url(#podBg)"/><g fill="none" stroke="#fff" stroke-width="2.800"><path d="M20 52a26 26 0 1 1 31 0"/><path d="M24 43a17 17 0 1 1 23 0"/></g><circle cx="35.500" cy="30" r="6.500" fill="#fff"/><path d="M30.500 40h10l-2 20q-3 4-6 0z" fill="#fff"/></svg></div>
    <div class="dock-item"><svg viewBox="0 0 71 71"><defs><linearGradient id="tvBg" x1="0" y1="0" x2="0" y2="1"><stop offset="0" stop-color="#243630"/><stop offset="1" stop-color="#0e1212"/></linearGradient></defs><rect width="71" height="71" rx="15" fill="url(#tvBg)"/><use href="#apple" x="8" y="20" width="24" height="26" fill="#fff"/><text x="32" y="46" class="tv-label">tv</text></svg></div>
    <div class="dock-item"><svg viewBox="0 0 71 71"><defs><linearGradient id="bookBg" x1="0" y1="0" x2="0" y2="1"><stop offset="0" stop-color="#ff9e2a"/><stop offset="1" stop-color="#fb6b22"/></linearGradient></defs><rect width="71" height="71" rx="15" fill="url(#bookBg)"/><path d="M11 54V22q0-7 7-7h4q11 0 12 8v34l-10-5q-6-2-13 2zM60 54V22q0-7-7-7h-4q-11 0-12 8v34l10-5q6-2 13 2z" fill="#f5ede4"/></svg></div>
    <div class="dock-item"><svg viewBox="0 0 71 71"><rect width="71" height="71" rx="15" fill="url(#blueV)"/><g stroke="#fff" stroke-width="5.500" stroke-linecap="round" fill="none"><path d="M42 12L17 56"/><path d="M29 12l25 44"/><path d="M11 43h49"/></g></svg><span class="dock-badge">3</span></div>
    <div class="dock-item"><svg viewBox="0 0 71 71"><defs><linearGradient id="setBg" x1="0" y1="0" x2="0" y2="1"><stop offset="0" stop-color="#cfdde4"/><stop offset="1" stop-color="#9e9d9a"/></linearGradient></defs><rect width="71" height="71" rx="15" fill="url(#setBg)"/><circle cx="35.500" cy="35.500" r="29" fill="#3b3c3e"/><circle cx="35.500" cy="35.500" r="25" fill="none" stroke="#a5a6a8" stroke-width="6" stroke-dasharray="2 2"/><circle cx="35.500" cy="35.500" r="18" fill="#5a5b5e" stroke="#c4c5c7" stroke-width="2.500"/><path d="M35.500 35.500V17M35.500 35.500l16 9M35.500 35.500l-16 9" stroke="#c4c5c7" stroke-width="3.500"/></svg></div>
    <span class="dock-divider dock-divider-a"></span>
    <div class="dock-item"><svg viewBox="0 0 71 71"><defs><linearGradient id="tgBg" x1="0" y1="0" x2="0" y2="1"><stop offset="0" stop-color="#47b9f2"/><stop offset="1" stop-color="#1f96d6"/></linearGradient></defs><rect width="71" height="71" rx="15" fill="#f4f6f7"/><circle cx="35.500" cy="35.500" r="32" fill="url(#tgBg)"/><path d="M16 36l32-14-6 30-9-7-5 5-1-9 13-12-17 10z" fill="#f4f8fb"/></svg></div>
    <div class="dock-item"><svg viewBox="0 0 71 71"><rect width="71" height="71" rx="15" fill="#001e36"/><text x="35.500" y="48" text-anchor="middle" class="ps-label">Ps</text></svg></div>
    <div class="dock-item"><svg viewBox="0 0 71 71"><defs><linearGradient id="skyBg" x1="0" y1="0" x2="0" y2="1"><stop offset="0" stop-color="#8fb4e8"/><stop offset="1" stop-color="#c9d8e8"/></linearGradient></defs><rect width="71" height="71" rx="15" fill="#f4f3ef"/><rect x="6" y="6" width="59" height="59" rx="8" fill="url(#skyBg)"/><rect x="6" y="40" width="59" height="14" fill="#2f5e9a"/><path d="M6 54h59v3a8 8 0 0 1-8 8H14a8 8 0 0 1-8-8z" fill="#c3b8a8"/><rect x="41" y="36" width="26" height="14" rx="3" fill="#151515"/><path d="M44 50h20l5 22q0 3-5 3H44q-5 0-5-3z" fill="#c9ccce" stroke="#222" stroke-width="1.500"/></svg></div>
    <span class="dock-divider dock-divider-b"></span>
    <div class="dock-item"><svg viewBox="0 0 71 71"><path d="M6 -5h44l14 16v66H6z" fill="#efefef"/><path d="M0 0h44l14 17v57H0z" fill="#fff"/><rect x="13" y="30" width="34" height="37" rx="2" fill="#8d9193"/><circle cx="30" cy="47" r="12" fill="#b3b6b8" stroke="#777"/><rect x="13" y="59" width="34" height="8" fill="#333"/></svg></div>
    <div class="dock-item"><svg viewBox="0 0 71 71"><rect x="8" y="3" width="60" height="16" fill="#f8dfe8"/><rect x="3" y="9" width="66" height="16" fill="#fcecf2"/><rect x="0" y="16" width="73" height="48" fill="#fff"/><rect x="2" y="18" width="69" height="4" fill="#f3a9c2"/><rect x="2" y="24" width="69" height="3" fill="#e2e4e6"/><rect x="32" y="38" width="12" height="5" fill="#bcd4ee"/><rect x="2" y="58" width="69" height="4" fill="#ef9ab6"/><path d="M6 30h26M6 52h14M30 46h14" stroke="#c9ccd0" stroke-width="1.500"/></svg></div>
    <div class="dock-item"><svg viewBox="0 0 71 71"><defs><linearGradient id="trashBg" x1="0" y1="0" x2="1" y2="0"><stop offset="0" stop-color="#dfe1e1"/><stop offset=".5" stop-color="#f4f5f5"/><stop offset="1" stop-color="#cfd2d2"/></linearGradient></defs><path d="M4 4h63l-7 66q-2 4-10 4H22q-8 0-10-4z" fill="url(#trashBg)"/><path d="M10 6l7-10 6 10 7-6 6 8 8-9 6 9 6-3 3 8-24 6-24-6z" fill="#7f8588"/><path d="M22 0l6 8M40 0l3 8" stroke="#f2f2f2" stroke-width="3"/></svg></div>
  </footer>
</body>
</html>
```

FILE: styles.css
```css
body {
  margin: 0;
  width: 2560px;
  height: 1600px;
  overflow: hidden;
  background-color: #d87a94;
  font-family: "Inter", "Noto Sans", sans-serif;
  letter-spacing: -0.25px;
  display: flex;
  flex-direction: column;
  color: #1f2328;
}

.sprites {
  position: absolute;
}

/* menu bar */
.menubar {
  height: 49px;
  flex: none;
  box-sizing: border-box;
  background-color: #ffabc8;
  display: flex;
  align-items: center;
  gap: 42px;
  padding: 0 38px 0 39px;
  font-size: 26px;
  letter-spacing: -0.25px;
  color: #231a1e;
}

.menu-apple {
  width: 28px;
  height: 32px;
  fill: #231a1e;
  margin-right: -2px;
}

.menu-app {
  font-weight: 700;
}

.menu-status {
  margin-left: auto;
  display: flex;
  align-items: center;
  gap: 36px;
}

.menu-bluetooth {
  margin-right: 9px;
}

.input-badge {
  width: 32px;
  height: 32px;
  border-radius: 4px;
  background-color: #231a1e;
  color: #ffabc8;
  font-size: 17px;
  font-weight: 600;
  display: flex;
  align-items: center;
  justify-content: center;
}

.menu-clock {
  white-space: nowrap;
  margin-left: -2px;
  letter-spacing: 0;
}

/* safari window */
.window {
  height: 1417px;
  flex: none;
  display: flex;
  flex-direction: column;
  position: relative;
  overflow: hidden;
  border-radius: 20px;
  background-color: #fff;
}

.toolbar {
  height: 104px;
  flex: none;
  box-sizing: border-box;
  background-color: #fdf7f9;
  display: grid;
  grid-template-columns: 764px 1032px 1fr;
  align-items: center;
}

.toolbar-left {
  display: flex;
  align-items: center;
  padding-left: 40px;
  gap: 16px;
}

.light {
  width: 24px;
  height: 24px;
  border-radius: 50%;
}

.light-red { background-color: #ff5f57; }
.light-yellow { background-color: #febc2e; }
.light-green { background-color: #28c840; }

.sidebar-btn {
  margin-left: 36px;
}

.sidebar-chevron {
  margin-left: -3px;
}

.nav-back {
  margin-left: 35px;
}

.nav-forward {
  margin-left: 35px;
}

.urlbar {
  height: 55px;
  box-sizing: border-box;
  border: 2px solid #e2dddf;
  border-radius: 12px;
  display: flex;
  align-items: center;
  padding: 2px 12px 0 435px;
  font-size: 26px;
  color: #4b4749;
}

.url-lock {
  margin-right: 13px;
  margin-top: -2px;
}

.url-translate {
  margin-left: auto;
  margin-top: -4px;
}

.url-reload {
  margin-left: 14px;
  margin-top: -4px;
}

.translate-a {
  font: 600 13px "Inter", sans-serif;
  fill: #1b68de;
}

.toolbar-right {
  display: flex;
  align-items: center;
  justify-content: flex-end;
  gap: 41px;
  padding-right: 40px;
}

.tool-plus {
  margin: 0 2px;
}

/* tabs */
.tabbar {
  height: 57px;
  flex: none;
  box-sizing: border-box;
  display: flex;
  background-color: #efeaeb;
  border-top: 1px solid #dedadb;
  border-bottom: 2px solid #d6d4d6;
  font-size: 22px;
  color: #6e6a6c;
}

.pin {
  width: 71.95px;
  flex: none;
  box-sizing: border-box;
  padding-top: 3px;
  border-right: 1px solid #d9d5d6;
  display: flex;
  align-items: center;
  justify-content: center;
}

.tab {
  width: 238.6px;
  flex: none;
  box-sizing: border-box;
  padding-top: 3px;
  border-right: 1px solid #d9d5d6;
  display: flex;
  align-items: center;
  justify-content: center;
  gap: 10px;
  white-space: nowrap;
}

.tab-last {
  border-right: none;
  padding-right: 16px;
}

.tab-vk {
  padding-right: 6px;
}

.tab-active {
  background-color: #fdf7f9;
  color: #4a4648;
  margin-top: -1px;
  margin-bottom: -2px;
  padding-right: 10px;
}

.fav {
  width: 32px;
  height: 32px;
  flex: none;
}

.fav-grey { fill: #8f8d8e; }
.fav-dark { fill: #1f2328; }

.fav-figma {
  width: 20px;
  height: 32px;
}

.fav-tile {
  width: 32px;
  height: 32px;
  flex: none;
  display: flex;
  align-items: center;
  justify-content: center;
  font-weight: 700;
  color: #fff;
}

.fav-be {
  background-color: #0b57f5;
  font-size: 19px;
}

.fav-w {
  background-color: #b82a7c;
  font-family: "Liberation Serif", serif;
  font-weight: 400;
  font-size: 24px;
}

.fav-f {
  background-color: #3474e8;
  border-radius: 5px;
  font-size: 28px;
  font-weight: 800;
}

.fav-t {
  box-sizing: border-box;
  border: 2px solid #111;
  border-radius: 50%;
  color: #111;
  font-family: "Liberation Serif", serif;
  font-weight: 400;
  font-size: 20px;
}

.fav-r {
  background-color: #0d2438;
  border-radius: 6px;
  font-size: 20px;
}

.fav-ya {
  width: 24px;
  color: #f01b1b;
  font-size: 32px;
  text-align: center;
  margin-right: 3px;
}

.fav-vk {
  height: 36px;
  background-color: #1a80f5;
  border-radius: 9px;
  font-size: 17px;
  font-weight: 800;
  letter-spacing: -1.5px;
}

/* github header */
.gh-header {
  height: 207px;
  flex: none;
  box-sizing: border-box;
  background-color: #f6f8fa;
  border-bottom: 2px solid #d0d7de;
}

.gh-top {
  height: 127px;
  display: flex;
  align-items: center;
  padding: 0 32px 0 33px;
  box-sizing: border-box;
  font-size: 28px;
}

.oct {
  width: 32px;
  height: 32px;
  fill: #636c76;
  flex: none;
}

.gh-btn {
  width: 62px;
  height: 63px;
  flex: none;
  padding: 0;
  background: none;
  border: 2px solid #d0d7de;
  border-radius: 12px;
  display: flex;
  align-items: center;
  justify-content: center;
  margin-left: 18px;
}

.gh-menu {
  margin-left: 0;
}

.gh-logo {
  width: 64px;
  height: 64px;
  fill: #1f2328;
  margin-left: 35px;
  flex: none;
}

.gh-owner {
  margin-left: 30px;
}

.gh-slash {
  margin: 0 16px;
  color: #636c76;
}

.gh-repo {
  font-weight: 600;
}

.gh-search {
  width: 698px;
  height: 63px;
  box-sizing: border-box;
  border: 2px solid #d0d7de;
  border-radius: 12px;
  margin-left: auto;
  display: flex;
  align-items: center;
  padding-left: 14px;
  color: #636c76;
}

.gh-search span:first-of-type {
  margin-left: 16px;
}

.gh-search kbd {
  width: 24px;
  height: 32px;
  box-sizing: border-box;
  border: 2px solid #636c76;
  border-radius: 6px;
  margin: 0 7px;
  display: flex;
  align-items: center;
  justify-content: center;
  font: 400 22px "Inter", sans-serif;
}

.gh-divider {
  width: 2px;
  height: 40px;
  background-color: #d0d7de;
  margin-left: 25px;
}

.gh-plus {
  width: 115px;
  margin-left: 24px;
  gap: 12px;
}

.gh-avatar {
  width: 68px;
  height: 68px;
  margin-left: 17px;
  flex: none;
}

.gh-nav {
  height: 78px;
  box-sizing: border-box;
  display: flex;
  align-items: flex-start;
  gap: 47.4px;
  padding: 17px 0 0 48px;
  font-size: 28px;
  letter-spacing: -0.3px;
}

.nav-item {
  display: flex;
  align-items: center;
  gap: 17px;
  white-space: nowrap;
}

.nav-current {
  gap: 25px;
  font-weight: 600;
  padding-right: 9px;
  position: relative;
}

.nav-current::after {
  content: "";
  position: absolute;
  left: -15px;
  right: -16px;
  top: 59px;
  height: 4px;
  background-color: #fd8c73;
}

/* page */
.content {
  flex: 1;
  min-height: 0;
  padding: 0 64px;
}

.crumbs {
  height: 129px;
  box-sizing: border-box;
  padding-top: 51px;
  font-size: 32px;
  line-height: 44px;
  color: #636c76;
}

.crumbs a {
  color: #0969da;
  font-weight: 600;
  letter-spacing: -0.5px;
}

.dropzone {
  height: 555px;
  box-sizing: border-box;
  border: 2px solid #d0d7de;
  border-radius: 12px;
  text-align: center;
  padding-top: 163px;
}

.drop-icon {
  width: 48px;
  height: 56px;
  display: block;
  margin: 0 auto;
}

.dropzone h2 {
  margin: 32px 0 0;
  font-size: 48px;
  line-height: 60px;
  font-weight: 600;
  letter-spacing: -1.35px;
}

.dropzone p {
  margin: 16px 0 0;
  font-size: 32px;
  line-height: 44px;
  letter-spacing: -0.4px;
  color: #636c76;
}

.dropzone a {
  color: #0969da;
}

.file-row {
  height: 110px;
  box-sizing: border-box;
  margin-top: 33px;
  border: 2px solid #d0d7de;
  border-radius: 12px;
  display: flex;
  align-items: center;
  padding: 0 32px;
  gap: 16px;
  font-size: 28px;
}

.file-row .oct {
  fill: #1f2328;
}

.file-remove {
  margin-left: auto;
}

.commit {
  display: flex;
  margin-top: 32px;
  gap: 33px;
  align-items: flex-start;
}

.commit-avatar {
  width: 96px;
  height: 96px;
  flex: none;
}

.commit-box {
  flex: 1;
  position: relative;
  height: 300px;
  box-sizing: border-box;
  border: 2px solid #d0d7de;
  border-radius: 12px;
  padding: 38px 32px 0;
}

.commit-box::before {
  content: "";
  position: absolute;
  left: -11px;
  top: 28px;
  width: 20px;
  height: 20px;
  background-color: #fff;
  border-left: 2px solid #d0d7de;
  border-bottom: 2px solid #d0d7de;
  transform: rotate(45deg);
}

.commit-box h3 {
  margin: 0;
  font-size: 40px;
  line-height: 48px;
  font-weight: 600;
  letter-spacing: -0.9px;
}

.commit-input {
  margin-top: 22px;
  height: 120px;
  box-sizing: border-box;
  background-color: #f6f8fa;
  border: 2px solid #d0d7de;
  border-radius: 12px;
  padding: 18px 23px;
  font-size: 28px;
  line-height: 40px;
  letter-spacing: -0.35px;
  color: #636c76;
}

.dock-shade {
  position: absolute;
  left: 0;
  right: 0;
  bottom: 0;
  height: 66px;
  background: linear-gradient(180deg, rgba(0, 0, 0, 0), rgba(30, 35, 45, 0.12));
  -webkit-mask-image: linear-gradient(90deg, transparent 0, #000 140px, #000 2420px, transparent 100%);
}

/* dock */
.dock-gap {
  height: 14px;
  flex: none;
  background: linear-gradient(90deg, #d87a94 0, #985a6c 70px, #985a6c 2490px, #d87a94 100%);
}

.dock {
  width: 2410px;
  height: 110px;
  flex: none;
  box-sizing: border-box;
  margin-left: 75px;
  padding: 17px 0 0 15px;
  background-color: #f89ab9;
  border-radius: 26px;
  border-bottom: 2px solid #fba9c4;
  display: flex;
  align-items: flex-start;
  gap: 21.65px;
}

.dock-item {
  width: 71px;
  height: 71px;
  flex: none;
  position: relative;
}

.dock-item > svg {
  width: 71px;
  height: 71px;
  display: block;
  overflow: visible;
}

.running::after {
  content: "";
  position: absolute;
  left: 32px;
  top: 82px;
  width: 6px;
  height: 6px;
  border-radius: 50%;
  background-color: #7a1c48;
}

.dock-cal {
  background-color: #fafafa;
  border-radius: 15px;
  overflow: hidden;
  text-align: center;
}

.cal-month {
  display: block;
  height: 22px;
  line-height: 24px;
  background-color: #f2575a;
  color: #fff;
  font-size: 15px;
  font-weight: 600;
}

.cal-day {
  display: block;
  font-size: 42px;
  font-weight: 300;
  line-height: 48px;
  color: #222;
}

.tv-label {
  font: 400 30px "Inter", sans-serif;
  fill: #fff;
}

.ps-label {
  font: 700 40px "Inter", sans-serif;
  fill: #2fa3f7;
}

.dock-badge {
  position: absolute;
  right: -12px;
  top: -9px;
  width: 32px;
  height: 32px;
  border-radius: 50%;
  background-color: #ee4044;
  color: #fff;
  font-size: 20px;
  display: flex;
  align-items: center;
  justify-content: center;
}

.dock-divider {
  width: 2px;
  height: 82px;
  flex: none;
  background-color: #a5566f;
}

.dock-divider-a {
  margin: 0 8px 0 12px;
}

.dock-divider-b {
  margin: 0 8px;
}
```
